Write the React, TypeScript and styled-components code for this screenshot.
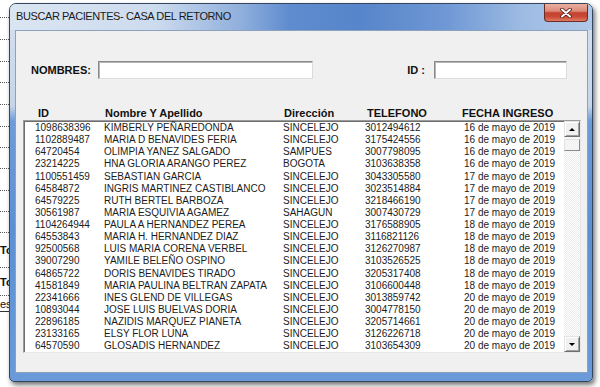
import React from 'react';
import styled, { createGlobalStyle } from 'styled-components';

type Patient = {
    id: string,
    name: string,
    city: string,
    phone: string,
    date: string,
}

const patients: Patient[] = [
    { id: '1098638396', name: 'KIMBERLY PEÑAREDONDA', city: 'SINCELEJO', phone: '3012494612', date: '16 de mayo de 2019' },
    { id: '1102889487', name: 'MARIA D BENAVIDES FERIA', city: 'SINCELEJO', phone: '3175424556', date: '16 de mayo de 2019' },
    { id: '64720454', name: 'OLIMPIA YANEZ SALGADO', city: 'SAMPUES', phone: '3007798095', date: '16 de mayo de 2019' },
    { id: '23214225', name: 'HNA GLORIA ARANGO PEREZ', city: 'BOGOTA', phone: '3103638358', date: '16 de mayo de 2019' },
    { id: '1100551459', name: 'SEBASTIAN GARCIA', city: 'SINCELEJO', phone: '3043305580', date: '17 de mayo de 2019' },
    { id: '64584872', name: 'INGRIS MARTINEZ CASTIBLANCO', city: 'SINCELEJO', phone: '3023514884', date: '17 de mayo de 2019' },
    { id: '64579225', name: 'RUTH BERTEL BARBOZA', city: 'SINCELEJO', phone: '3218466190', date: '17 de mayo de 2019' },
    { id: '30561987', name: 'MARIA ESQUIVIA AGAMEZ', city: 'SAHAGUN', phone: '3007430729', date: '17 de mayo de 2019' },
    { id: '1104264944', name: 'PAULA A HERNANDEZ PEREA', city: 'SINCELEJO', phone: '3176588905', date: '18 de mayo de 2019' },
    { id: '64553843', name: 'MARIA H. HERNANDEZ DIAZ', city: 'SINCELEJO', phone: '3116821126', date: '18 de mayo de 2019' },
    { id: '92500568', name: 'LUIS MARIA CORENA VERBEL', city: 'SINCELEJO', phone: '3126270987', date: '18 de mayo de 2019' },
    { id: '39007290', name: 'YAMILE BELEÑO OSPINO', city: 'SINCELEJO', phone: '3103526525', date: '18 de mayo de 2019' },
    { id: '64865722', name: 'DORIS BENAVIDES TIRADO', city: 'SINCELEJO', phone: '3205317408', date: '18 de mayo de 2019' },
    { id: '41581849', name: 'MARIA PAULINA BELTRAN ZAPATA', city: 'SINCELEJO', phone: '3106600448', date: '18 de mayo de 2019' },
    { id: '22341666', name: 'INES GLEND DE VILLEGAS', city: 'SINCELEJO', phone: '3013859742', date: '20 de mayo de 2019' },
    { id: '10893044', name: 'JOSE LUIS BUELVAS DORIA', city: 'SINCELEJO', phone: '3004778150', date: '20 de mayo de 2019' },
    { id: '22896185', name: 'NAZIDIS MARQUEZ PIANETA', city: 'SINCELEJO', phone: '3205714661', date: '20 de mayo de 2019' },
    { id: '23133165', name: 'ELSY FLOR LUNA', city: 'SINCELEJO', phone: '3126226718', date: '20 de mayo de 2019' },
    { id: '64570590', name: 'GLOSADIS HERNANDEZ', city: 'SINCELEJO', phone: '3103654309', date: '20 de mayo de 2019' },
];

// the spreadsheet peeking out at the left of the window
const sheetCells: { h: number, text?: string, underline?: boolean }[] = [
    { h: 18 }, { h: 22 }, { h: 22 }, { h: 21 }, { h: 22 }, { h: 22 }, { h: 21 },
    { h: 21 }, { h: 22 }, { h: 21 }, { h: 21 }, { h: 35, text: 'To' },
    { h: 28, text: 'To' }, { h: 16, text: 'es', underline: true },
];

const GlobalStyle = createGlobalStyle`
    html, body {
        margin: 0;
        padding: 0;
        width: 600px;
        height: 387px;
        overflow: hidden;
        background: #ffffff;
        font-family: "Liberation Sans", Arial, sans-serif;
    }
`;

const Desktop = styled.div`
    display: flex;
    width: 600px;
    height: 387px;
    background: #ffffff;
    overflow: hidden;
`;

const SheetStrip = styled.div`
    flex: none;
    width: 9px;
    display: flex;
    flex-direction: column;
    overflow: hidden;
`;

const SheetCell = styled.div<{ $h: number, $underline?: boolean }>`
    flex: none;
    height: ${p => p.$h}px;
    box-sizing: border-box;
    border-bottom: ${p => p.$underline ? '1px solid #333' : '1px dotted #555'};
    font-size: 11px;
    font-weight: ${p => p.$underline ? 'normal' : 'bold'};
    color: #111;
    display: flex;
    align-items: center;
    white-space: nowrap;
`;

const Window = styled.div`
    flex: none;
    margin-top: 3px;
    width: 584px;
    height: 379px;
    box-sizing: border-box;
    display: flex;
    flex-direction: column;
    border: 1px solid #34465f;
    border-radius: 7px 7px 5px 5px;
    overflow: hidden;
    background: linear-gradient(to bottom, #d3e0ef 0%, #c6d6ea 27%, #6f9cd8 31%, #5d8fd3 60%, #6a9ad8 100%);
    box-shadow: 2px 3px 5px rgba(0, 0, 0, 0.55);
`;

const TitleBar = styled.div`
    flex: none;
    height: 26px;
    display: flex;
    justify-content: space-between;
    align-items: flex-start;
    padding-left: 6px;
    background: linear-gradient(to right, #dae5f2 0%, #cddbee 25%, #8eaedc 40%, #5f8ccf 48%, #5785cb 60%, #6f98d4 75%, #9dbbe3 88%, #b0c8e8 100%);
`;

const Title = styled.div`
    margin-top: 6px;
    font-size: 11px;
    letter-spacing: -0.4px;
    color: #1a1a1a;
    white-space: nowrap;
`;

const CloseButton = styled.div`
    width: 44px;
    height: 18px;
    margin-right: 4px;
    box-sizing: border-box;
    display: flex;
    align-items: center;
    justify-content: center;
    border: 1px solid #6a2c26;
    border-top: none;
    border-radius: 0 0 4px 4px;
    background: linear-gradient(to bottom, #eab0a2 0%, #dc8a78 42%, #c5412f 52%, #c94a36 75%, #e07c62 100%);
`;

const Frame = styled.div`
    flex: 1;
    display: flex;
    padding: 0 4px 8px 5px;
    min-height: 0;
`;

const Client = styled.div`
    flex: 1;
    display: flex;
    flex-direction: column;
    background: #f0f0f0;
    border: 1px solid #8ca1bc;
`;

const SearchRow = styled.div`
    display: flex;
    align-items: center;
    height: 18px;
    margin-top: 30px;
    padding: 0 20px 0 15px;
`;

const Field = styled.div<{ $push?: boolean }>`
    display: flex;
    align-items: center;
    gap: ${p => p.$push ? 9 : 7}px;
    margin-left: ${p => p.$push ? 'auto' : '0'};
`;

const Label = styled.span`
    font-size: 11px;
    font-weight: bold;
    color: #111;
`;

const TextBox = styled.div<{ $w: number }>`
    width: ${p => p.$w}px;
    height: 18px;
    box-sizing: border-box;
    background: #ffffff;
    border: 1px solid;
    border-color: #8a8a8a #dcdcdc #dcdcdc #8a8a8a;
    box-shadow: inset 1px 1px 0 #b5b5b5;
`;

const HeaderRow = styled.div`
    display: grid;
    grid-template-columns: 67px 179px 83px 95px 1fr;
    margin-top: 27px;
    height: 14px;
    padding-left: 22px;
    align-items: center;
    font-size: 11px;
    font-weight: bold;
    color: #111;
    white-space: nowrap;
`;

const ListBox = styled.div`
    display: flex;
    height: 233px;
    margin: 0 6px 0 7px;
    box-sizing: border-box;
    background: #ffffff;
    border: 1px solid;
    border-color: #9a9a9a #e8e8e8 #e8e8e8 #9a9a9a;
    box-shadow: inset 1px 1px 0 #6e6e6e;
`;

const Rows = styled.div`
    flex: 1;
    padding-top: 1px;
    overflow: hidden;
`;

const Row = styled.div`
    display: grid;
    grid-template-columns: 69px 179px 82px 99px 1fr;
    padding-left: 11px;
    height: 12.13px;
    line-height: 12.13px;
    font-size: 10px;
    color: #1c1c1c;
    white-space: nowrap;
`;

const ScrollBar = styled.div`
    flex: none;
    width: 16px;
    display: flex;
    flex-direction: column;
    background: repeating-conic-gradient(#ffffff 0 25%, #ebebeb 0 50%) 0 0 / 2px 2px;
`;

const ScrollButton = styled.div<{ $down?: boolean }>`
    flex: none;
    height: 16px;
    box-sizing: border-box;
    display: flex;
    align-items: center;
    justify-content: center;
    background: #f0f0f0;
    border: 1px solid;
    border-color: #e3e3e3 #6f6f6f #6f6f6f #e3e3e3;
    box-shadow: inset 1px 1px 0 #ffffff, inset -1px -1px 0 #a0a0a0;
    margin-top: ${p => p.$down ? 'auto' : '0'};

    &::after {
        content: '';
        width: 0;
        height: 0;
        border-left: 3px solid transparent;
        border-right: 3px solid transparent;
        ${p => p.$down ? 'border-top: 3px solid #000;' : 'border-bottom: 3px solid #000;'}
    }
`;

const Thumb = styled.div`
    flex: none;
    height: 12px;
    margin-top: 2px;
    box-sizing: border-box;
    background: #f4f4f4;
    border: 1px solid;
    border-color: #e3e3e3 #8a8a8a #8a8a8a #e3e3e3;
`;

export default function App() {
    return <>
        <GlobalStyle />
        <Desktop>
            <SheetStrip>
                {sheetCells.map((c, i) =>
                    <SheetCell key={i} $h={c.h} $underline={c.underline}>{c.text}</SheetCell>
                )}
            </SheetStrip>
            <Window>
                <TitleBar>
                    <Title>BUSCAR PACIENTES- CASA DEL RETORNO</Title>
                    <CloseButton>
                        <svg width="12" height="10" viewBox="0 0 12 10">
                            <path d="M2 1.5 L10 8.5 M10 1.5 L2 8.5" stroke="#4a1d18" strokeWidth="3.6" strokeLinecap="round" />
                            <path d="M2 1.5 L10 8.5 M10 1.5 L2 8.5" stroke="#ffffff" strokeWidth="2" strokeLinecap="round" />
                        </svg>
                    </CloseButton>
                </TitleBar>
                <Frame>
                    <Client>
                        <SearchRow>
                            <Field>
                                <Label>NOMBRES:</Label>
                                <TextBox $w={215} />
                            </Field>
                            <Field $push>
                                <Label>ID :</Label>
                                <TextBox $w={133} />
                            </Field>
                        </SearchRow>
                        <HeaderRow>
                            <span>ID</span>
                            <span>Nombre Y Apellido</span>
                            <span>Dirección</span>
                            <span>TELEFONO</span>
                            <span>FECHA INGRESO</span>
                        </HeaderRow>
                        <ListBox>
                            <Rows>
                                {patients.map(p =>
                                    <Row key={p.id}>
                                        <span>{p.id}</span>
                                        <span>{p.name}</span>
                                        <span>{p.city}</span>
                                        <span>{p.phone}</span>
                                        <span>{p.date}</span>
                                    </Row>
                                )}
                            </Rows>
                            <ScrollBar>
                                <ScrollButton />
                                <Thumb />
                                <ScrollButton $down />
                            </ScrollBar>
                        </ListBox>
                    </Client>
                </Frame>
            </Window>
        </Desktop>
    </>;
}
